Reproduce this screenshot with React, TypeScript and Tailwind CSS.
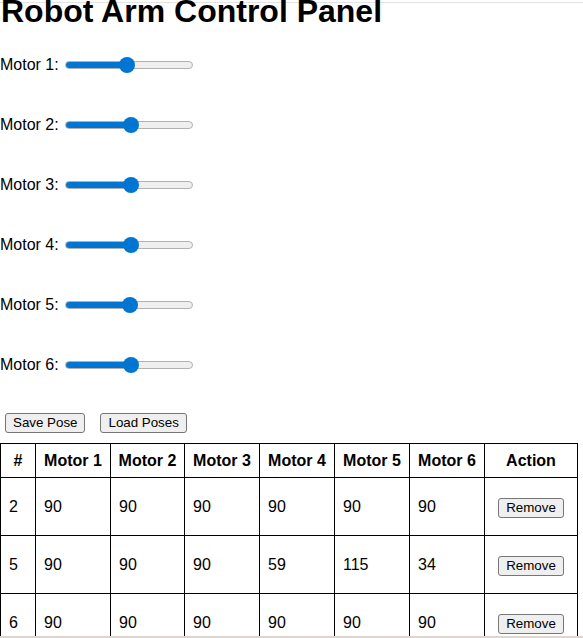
import { useState } from 'react';

const poses = [
  { id: 2, m: [90, 90, 90, 90, 90, 90] },
  { id: 5, m: [90, 90, 90, 59, 115, 34] },
  { id: 6, m: [90, 90, 90, 90, 90, 90] },
];

const btn =
  'rounded-[3px] border border-[#767676] bg-[#efefef] px-[7px] py-px text-[13.33px] leading-[16px]';

export default function App() {
  const [motors, setMotors] = useState([88, 93, 93, 93, 92, 93]);

  return (
    <div className="relative h-[638px] overflow-hidden bg-white text-black font-['Liberation_Sans',Arial,sans-serif] text-[16px]">
      {/* browser frame line */}
      <div className="absolute left-0 right-0 top-[2px] h-px bg-[#e3e3e3]" />

      <h1 className="relative mt-[-7px] mb-[23px] pl-[1px] text-[32px] font-bold leading-[37px]">
        Robot Arm Control Panel
      </h1>

      <div className="flex flex-col gap-[36px]">
        {motors.map((v, i) => {
          // fill the track up to the thumb centre
          const fill = ((9 + (v / 180) * 110) / 128) * 100;
          return (
            <div key={i} className="flex h-[24px] items-center">
              <label>Motor {i + 1}:</label>
              <input
                type="range"
                min={0}
                max={180}
                value={v}
                onChange={(e) => {
                  const next = [...motors];
                  next[i] = Number(e.target.value);
                  setMotors(next);
                }}
                style={{
                  background: `linear-gradient(to right, #0075d2 ${fill}%, #efefef ${fill}%)`,
                }}
                className="ml-[6px] h-[8px] w-[128px] cursor-pointer appearance-none rounded-full border border-[#b2b2b2] outline-none [&::-webkit-slider-thumb]:h-[16px] [&::-webkit-slider-thumb]:w-[16px] [&::-webkit-slider-thumb]:appearance-none [&::-webkit-slider-thumb]:rounded-full [&::-webkit-slider-thumb]:bg-[#0075d2]"
              />
            </div>
          );
        })}
      </div>

      <div className="mt-[36px] flex gap-[15px] pl-[5px]">
        <button className={btn}>Save Pose</button>
        <button className={btn}>Load Poses</button>
      </div>

      <table className="mt-[10px] w-[577px] table-fixed border-collapse">
        <colgroup>
          <col className="w-[35px]" />
          <col className="w-[75px]" />
          <col className="w-[74px]" />
          <col className="w-[75px]" />
          <col className="w-[75px]" />
          <col className="w-[75px]" />
          <col className="w-[75px]" />
          <col className="w-[93px]" />
        </colgroup>
        <thead>
          <tr className="h-[34px]">
            <th className="border border-black font-bold">#</th>
            {[1, 2, 3, 4, 5, 6].map((n) => (
              <th key={n} className="border border-black font-bold">
                Motor {n}
              </th>
            ))}
            <th className="border border-black font-bold">Action</th>
          </tr>
        </thead>
        <tbody>
          {poses.map((p) => (
            <tr key={p.id} className="h-[58px]">
              <td className="border border-black pl-[8px]">{p.id}</td>
              {p.m.map((v, j) => (
                <td key={j} className="border border-black pl-[8px]">
                  {v}
                </td>
              ))}
              <td className="border border-black text-center">
                <button className={btn}>Remove</button>
              </td>
            </tr>
          ))}
        </tbody>
      </table>

      <div className="absolute bottom-0 left-0 right-0 h-[2px] bg-[#dcd6cf]" />
    </div>
  );
}
